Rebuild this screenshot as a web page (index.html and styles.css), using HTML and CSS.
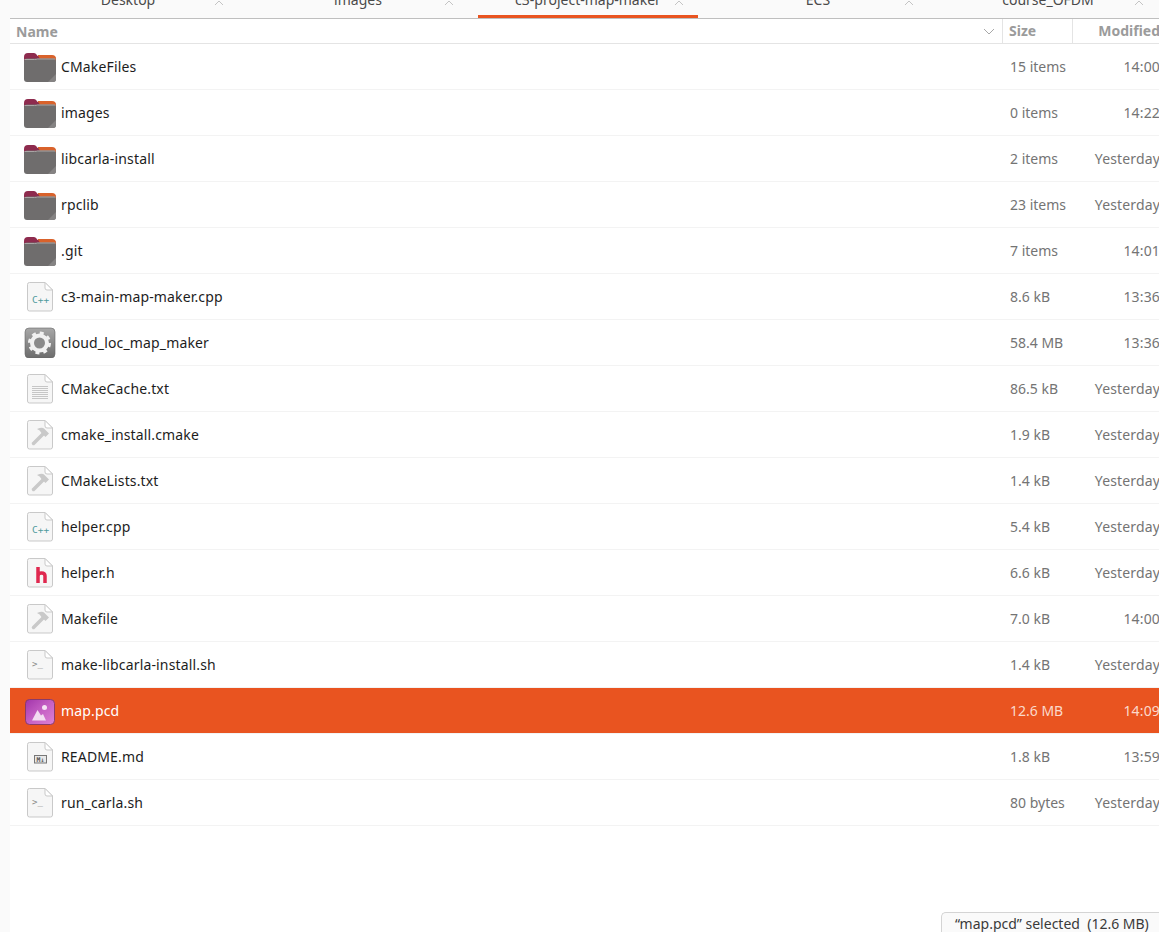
FILE: index.html
```html
<!DOCTYPE html>
<html lang="en">
<head>
  <meta charset="UTF-8" />
  <title>c3-project-map-maker</title>
  <link rel="stylesheet" href="styles.css">
</head>
<body>
  <svg class="sprites" width="0" height="0">
    <defs>
      <linearGradient id="g-exec" x1="0" y1="0" x2="0" y2="1">
        <stop offset="0" stop-color="#a8a8a8"/>
        <stop offset="1" stop-color="#6c6c6c"/>
      </linearGradient>
      <linearGradient id="g-image" x1="0" y1="0" x2="1" y2="1">
        <stop offset="0" stop-color="#a235ab"/>
        <stop offset="0.500" stop-color="#c560c4"/>
        <stop offset="1" stop-color="#de82d6"/>
      </linearGradient>
    </defs>
    <symbol id="i-folder" viewBox="0 0 32 32">
      <path d="M0 7 a4 4 0 0 1 4-4 h6 a3 3 0 0 1 2.500 1.500 l1 1.500 h14.500 a4 4 0 0 1 4 4 v6 h-32z" fill="#8e2b4e"/>
      <path d="M13.500 5 h14.500 a4 4 0 0 1 4 4 v3 h-14z" fill="#d9622b"/>
      <rect x="0" y="8.500" width="32" height="23.500" rx="3" fill="#6f6d6d"/>
      <path d="M0.500 9.500 h10 q2 0 3-0.500 h18" fill="none" stroke="#a9a5a5" stroke-width="1"/>
      <path d="M24 32 l8-8 v5 a3 3 0 0 1-3 3z" fill="#858383"/>
    </symbol>
    <symbol id="i-page" viewBox="0 0 32 32">
      <path d="M5.500 2.500 H21 L28.500 10 V29 a2 2 0 0 1-2 2 H5.500 a2 2 0 0 1-2-2 V4.500 a2 2 0 0 1 2-2z" fill="#f6f6f6" stroke="#c9c9c9"/>
      <path d="M21 2.500 V8 a2 2 0 0 0 2 2 H28.500z" fill="#fff" stroke="#c9c9c9"/>
    </symbol>
    <symbol id="i-text" viewBox="0 0 32 32">
      <use href="#i-page"/>
      <path d="M8 14.500 h16 M8 16.500 h16 M8 18.500 h16 M8 20.500 h16 M8 22.500 h16 M8 24.500 h16 M8 26.500 h16" stroke="#c6c6c6" stroke-width="1"/>
    </symbol>
    <symbol id="i-make" viewBox="0 0 32 32">
      <use href="#i-page"/>
      <path d="M9.500 25.500 L20 15" stroke="#c9c9c9" stroke-width="3.500" stroke-linecap="round"/>
      <path d="M13 11 q5-2 7-0.500 l5 5 l-3.500 3.500 l-4-4 q-1.500-3-4.500-4z" fill="#c9c9c9"/>
    </symbol>
    <symbol id="i-header" viewBox="0 0 32 32">
      <use href="#i-page"/>
      <path d="M14 11 V27 M14 20 q0-3 3.500-3 q3.500 0 3.500 3 v7" fill="none" stroke="#e0284f" stroke-width="3.500"/>
    </symbol>
    <symbol id="i-exec" viewBox="0 0 32 32">
      <rect x="1" y="2" width="30" height="30" rx="4" fill="url(#g-exec)" stroke="#666" stroke-width="0.600"/>
      <circle cx="15.500" cy="17" r="7.500" fill="#8a8a8a" stroke="#f1f1f1" stroke-width="4"/>
      <circle cx="15.500" cy="17" r="10" fill="none" stroke="#f1f1f1" stroke-width="3" stroke-dasharray="3.900 3.950"/>
    </symbol>
    <symbol id="i-image" viewBox="0 0 32 32">
      <rect x="1.500" y="5.500" width="29" height="25" rx="4" fill="url(#g-image)" stroke="#8a3a6a" stroke-width="1"/>
      <circle cx="20.500" cy="13.500" r="2.500" fill="#f6e2f4"/>
      <path d="M8 26.500 L13.500 16 L17 21.500 L19 20 L22 26.500z" fill="#f3dcf1"/>
    </symbol>
  </svg>

  <div class="side-rule"></div>

  <div class="tabs">
    <div class="tab"><span>Desktop</span><svg class="tab-close" width="10" height="5" viewBox="0 0 10 5"><path d="M1 5 L5 1 L9 5"/></svg></div>
    <div class="tab"><span>images</span><svg class="tab-close" width="10" height="5" viewBox="0 0 10 5"><path d="M1 5 L5 1 L9 5"/></svg></div>
    <div class="tab active"><span>c3-project-map-maker</span><svg class="tab-close" width="10" height="5" viewBox="0 0 10 5"><path d="M1 5 L5 1 L9 5"/></svg></div>
    <div class="tab"><span>ECS</span><svg class="tab-close" width="10" height="5" viewBox="0 0 10 5"><path d="M1 5 L5 1 L9 5"/></svg></div>
    <div class="tab"><span>course_OFDM</span><svg class="tab-close" width="10" height="5" viewBox="0 0 10 5"><path d="M1 5 L5 1 L9 5"/></svg></div>
  </div>

  <div class="listing">
    <div class="head">
      <div class="head-name">Name <svg class="sort" width="12" height="7" viewBox="0 0 12 7"><path d="M1 1 L6 6 L11 1"/></svg></div>
      <div class="head-size">Size</div>
      <div class="head-mod">Modified</div>
    </div>

    <div class="row"><svg class="icon"><use href="#i-folder"/></svg><div class="name">CMakeFiles</div><div class="size">15 items</div><div class="mod">14:00</div></div>
    <div class="row"><svg class="icon"><use href="#i-folder"/></svg><div class="name">images</div><div class="size">0 items</div><div class="mod">14:22</div></div>
    <div class="row"><svg class="icon"><use href="#i-folder"/></svg><div class="name">libcarla-install</div><div class="size">2 items</div><div class="mod">Yesterday</div></div>
    <div class="row"><svg class="icon"><use href="#i-folder"/></svg><div class="name">rpclib</div><div class="size">23 items</div><div class="mod">Yesterday</div></div>
    <div class="row"><svg class="icon"><use href="#i-folder"/></svg><div class="name">.git</div><div class="size">7 items</div><div class="mod">14:01</div></div>
    <div class="row"><svg class="icon" viewBox="0 0 32 32"><use href="#i-page"/><text x="8" y="23" class="glyph-cpp">C++</text></svg><div class="name">c3-main-map-maker.cpp</div><div class="size">8.6 kB</div><div class="mod">13:36</div></div>
    <div class="row"><svg class="icon"><use href="#i-exec"/></svg><div class="name">cloud_loc_map_maker</div><div class="size">58.4 MB</div><div class="mod">13:36</div></div>
    <div class="row"><svg class="icon"><use href="#i-text"/></svg><div class="name">CMakeCache.txt</div><div class="size">86.5 kB</div><div class="mod">Yesterday</div></div>
    <div class="row"><svg class="icon"><use href="#i-make"/></svg><div class="name">cmake_install.cmake</div><div class="size">1.9 kB</div><div class="mod">Yesterday</div></div>
    <div class="row"><svg class="icon"><use href="#i-make"/></svg><div class="name">CMakeLists.txt</div><div class="size">1.4 kB</div><div class="mod">Yesterday</div></div>
    <div class="row"><svg class="icon" viewBox="0 0 32 32"><use href="#i-page"/><text x="8" y="23" class="glyph-cpp">C++</text></svg><div class="name">helper.cpp</div><div class="size">5.4 kB</div><div class="mod">Yesterday</div></div>
    <div class="row"><svg class="icon"><use href="#i-header"/></svg><div class="name">helper.h</div><div class="size">6.6 kB</div><div class="mod">Yesterday</div></div>
    <div class="row"><svg class="icon"><use href="#i-make"/></svg><div class="name">Makefile</div><div class="size">7.0 kB</div><div class="mod">14:00</div></div>
    <div class="row"><svg class="icon" viewBox="0 0 32 32"><use href="#i-page"/><text x="8" y="19" class="glyph-shell">&gt;_</text></svg><div class="name">make-libcarla-install.sh</div><div class="size">1.4 kB</div><div class="mod">Yesterday</div></div>
    <div class="row selected"><svg class="icon"><use href="#i-image"/></svg><div class="name">map.pcd</div><div class="size">12.6 MB</div><div class="mod">14:09</div></div>
    <div class="row"><svg class="icon" viewBox="0 0 32 32"><use href="#i-page"/><rect x="10.500" y="15.500" width="12" height="7.500" fill="#e8e8e8" stroke="#777"/><text x="16.500" y="21.500" class="glyph-md">M↓</text></svg><div class="name">README.md</div><div class="size">1.8 kB</div><div class="mod">13:59</div></div>
    <div class="row"><svg class="icon" viewBox="0 0 32 32"><use href="#i-page"/><text x="8" y="19" class="glyph-shell">&gt;_</text></svg><div class="name">run_carla.sh</div><div class="size">80 bytes</div><div class="mod">Yesterday</div></div>
  </div>

  <div class="status">“map.pcd” selected&nbsp; (12.6 MB)</div>
</body>
</html>
```

FILE: styles.css
```css
html {
  height: 100%;
  overflow: hidden;
}
body {
  margin: 0;
  height: 100%;
  font-family: "Noto Sans", sans-serif;
  font-size: 14px;
  color: #1d1d1d;
  background: #fff;
  position: relative;
  border-left: 10px solid #fafafa;
  box-sizing: border-box;
}
.sprites {
  position: absolute;
}
.side-rule {
  position: absolute;
  top: 454px;
  left: -10px;
  width: 9px;
  height: 1px;
  background: #d8d8d8;
}
.tabs {
  display: flex;
  gap: 10px;
  height: 19px;
  box-sizing: border-box;
  padding-left: 8px;
  margin-left: -1px;
  background: #fafafa;
  border-bottom: 1px solid #bfbfbf;
  border-left: 1px solid #d4d4d4;
  width: 1200px;
}
.tab {
  position: relative;
  flex: 0 0 220px;
  height: 18px;
  box-sizing: border-box;
  display: flex;
  justify-content: center;
  align-items: flex-end;
  color: #4a4a4a;
  line-height: 20px;
  padding-bottom: 8px;
}
.tab.active {
  border-bottom: 3px solid #e95420;
  padding-bottom: 5px;
}
.tab-close {
  position: absolute;
  top: 0;
  right: 14px;
}
.tab-close path {
  fill: none;
  stroke: #c4c4c4;
  stroke-width: 1;
}
.listing {
  margin-left: -1px;
  border-left: 1px solid #d4d4d4;
  min-height: 913px;
  width: 1200px;
}
.head, .row {
  display: grid;
  grid-template-columns: 993px 70px 87px;
}
.head {
  height: 25px;
  box-sizing: border-box;
  border-bottom: 1px solid #e4e4e4;
  color: #9b9b9b;
  font-weight: 700;
  line-height: 23px;
}
.head-name {
  display: flex;
  justify-content: space-between;
  align-items: center;
  padding: 0 7px 0 6px;
  border-right: 1px solid #e4e4e4;
}
.head-size {
  padding-left: 6px;
  border-right: 1px solid #e4e4e4;
}
.head-mod {
  text-align: right;
  white-space: nowrap;
}
.sort path {
  fill: none;
  stroke: #a8a8a8;
  stroke-width: 1;
}
.row {
  height: 46px;
  box-sizing: border-box;
  grid-template-columns: 51px 942px 70px 87px;
  align-items: center;
  border-bottom: 1px solid #f3f3f3;
  line-height: 45px;
}
.icon {
  width: 32px;
  height: 32px;
  margin: 0 0 1px 14px;
  display: block;
}
.name {
  letter-spacing: 0.15px;
}
.size, .mod {
  color: #747474;
}
.size {
  padding-left: 7px;
}
.mod {
  text-align: right;
  letter-spacing: 0.15px;
  white-space: nowrap;
}
.row.selected {
  background: #e95420;
  color: #fff;
}
.row.selected .size, .row.selected .mod {
  color: #fbd9cb;
}
.glyph-cpp {
  font-family: "DejaVu Sans Mono", monospace;
  font-size: 9.500px;
  fill: #4f9a9c;
}
.glyph-shell {
  font-family: "DejaVu Sans Mono", monospace;
  font-size: 9px;
  fill: #8a8a8a;
}
.glyph-md {
  font-family: "DejaVu Sans Mono", monospace;
  font-size: 6.500px;
  font-weight: 700;
  fill: #555;
  text-anchor: middle;
}
.status {
  position: absolute;
  right: 0;
  bottom: 0;
  width: 218px;
  height: 20px;
  box-sizing: border-box;
  padding-left: 13px;
  background: #fafafa;
  border: 1px solid #d4d4d4;
  border-bottom: none;
  border-right: none;
  border-top-left-radius: 5px;
  color: #3a3a3a;
  line-height: 22px;
  white-space: nowrap;
}
```
